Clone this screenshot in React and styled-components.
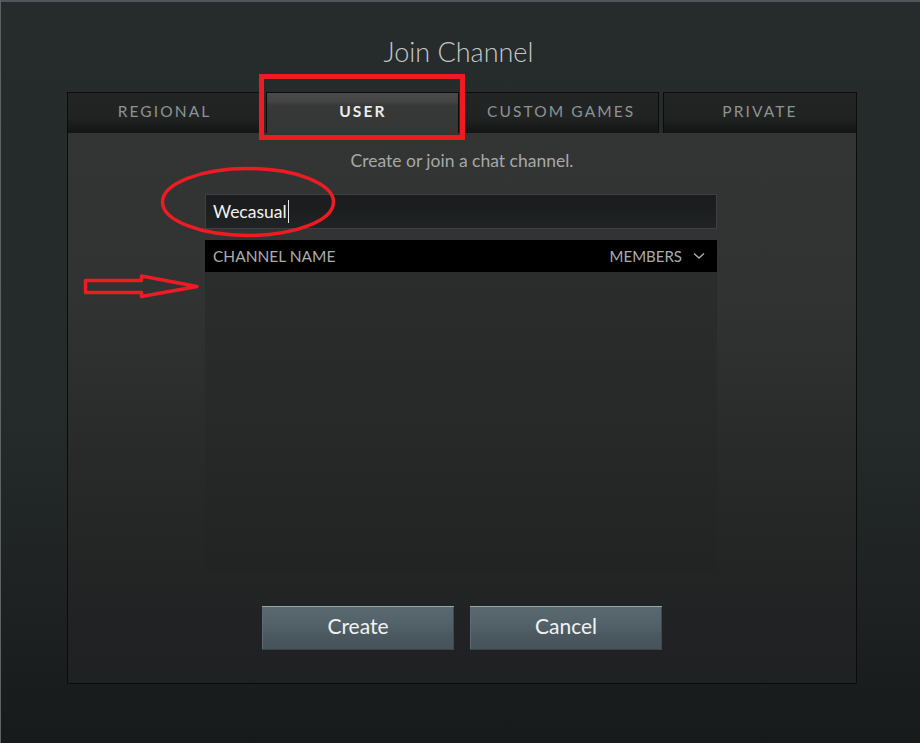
import React from 'react';
import styled, { createGlobalStyle } from 'styled-components';

const GlobalStyle = createGlobalStyle`
    html, body {
        margin: 0;
        padding: 0;
        background: #161a1b;
    }
    * {
        box-sizing: border-box;
    }
`

const Screen = styled.div`
    position: relative;
    width: 920px;
    height: 743px;
    overflow: hidden;
    display: flex;
    flex-direction: column;
    font-family: Lato, "Open Sans", sans-serif;
    background: linear-gradient(180deg, #262b2c 0%, #252a2b 55%, #1c2021 85%, #161a1b 100%);
    box-shadow: inset 1px 0 0 #5d6365, inset 0 2px 0 #50575a;
`

const Title = styled.h1`
    margin: 36px 0 0;
    height: 32px;
    line-height: 32px;
    text-align: center;
    font-size: 27px;
    font-weight: 300;
    color: #c6c8c8;
    padding-right: 3px;
`

const Panel = styled.div`
    margin: 24px 0 0 67px;
    width: 790px;
    display: flex;
    flex-direction: column;
`

const Tabs = styled.div`
    display: grid;
    grid-template-columns: 195px 193px 195px 194px;
    column-gap: 4px;
    justify-content: space-between;
    height: 41px;
`

const Tab = styled.div`
    display: flex;
    align-items: center;
    justify-content: center;
    border: 1px solid #0b0c0c;
    border-bottom: none;
    font-size: 15.5px;
    letter-spacing: 2.1px;
    font-weight: ${p => (p.$active ? 700 : 400)};
    color: ${p => (p.$active ? '#ececec' : '#8d9394')};
    background: ${p => (p.$active
        ? 'linear-gradient(180deg, #4a4a4a 0%, #454545 20%, #373838 32%, #353636 100%)'
        : 'linear-gradient(180deg, #232525 0%, #212323 62%, #181a1a 85%, #141616 100%)')};
    padding-bottom: 4px;
`

const Body = styled.div`
    height: 551px;
    border: 1px solid #0a0b0b;
    border-top: none;
    background: linear-gradient(180deg, #333434 0%, #313232 30%, #252727 70%, #1e2021 100%);
    display: flex;
    flex-direction: column;
    padding-top: 18px;
`

const Subtitle = styled.p`
    margin: 0;
    text-align: center;
    font-size: 17.5px;
    line-height: 20px;
    color: #a6a9a9;
`

const Column = styled.div`
    margin-left: 137px;
    width: 512px;
    display: flex;
    flex-direction: column;
`

const Input = styled.div`
    margin-top: 23px;
    height: 35px;
    border: 1px solid #3d3f40;
    background: linear-gradient(180deg, #1a1c1d 0%, #1c1e1f 50%, #212425 100%);
    display: flex;
    align-items: center;
    padding-left: 7px;
    font-size: 17.5px;
    color: #f2f2f2;
`

const Caret = styled.span`
    display: inline-block;
    width: 1px;
    height: 23px;
    background: #e8e8e8;
    margin-left: 1px;
`

const Table = styled.div`
    margin-top: 11px;
    display: flex;
    flex-direction: column;
`

const TableHead = styled.div`
    height: 32px;
    background: #000;
    display: flex;
    align-items: center;
    justify-content: space-between;
    padding: 0 12px 0 8px;
    font-size: 15.5px;
    color: #a9adad;
`

const HeadRight = styled.div`
    display: flex;
    align-items: center;
    gap: 11px;
    font-size: 15px;
`

const TableBody = styled.div`
    height: 301px;
    background: linear-gradient(180deg, #2b2c2c 0%, #282929 40%, #222424 100%);
`

const Buttons = styled.div`
    margin-top: 33px;
    display: flex;
    justify-content: center;
    gap: 16px;
`

const Button = styled.button`
    width: 192px;
    height: 43px;
    border: none;
    border-top: 1px solid #9aa3a6;
    background: linear-gradient(180deg, #5a6870 0%, #53626a 40%, #4a575e 70%, #46535a 100%);
    box-shadow: inset 1px 0 0 #5e6b72, inset -1px 0 0 #3e4a50, 0 1px 0 #3a4449;
    font-family: Lato, "Open Sans", sans-serif;
    font-size: 21px;
    color: #f0f2f2;
    padding: 0 0 5px;
    cursor: pointer;
`

const Overlay = styled.svg`
    position: absolute;
    top: 0;
    left: 0;
    pointer-events: none;
`

const tabs = ['REGIONAL', 'USER', 'CUSTOM GAMES', 'PRIVATE'];

function App() {
    return (
        <Screen>
            <GlobalStyle />
            <Title>Join Channel</Title>
            <Panel>
                <Tabs>
                    {tabs.map(t => (
                        <Tab key={t} $active={t === 'USER'}>{t}</Tab>
                    ))}
                </Tabs>
                <Body>
                    <Subtitle>Create or join a chat channel.</Subtitle>
                    <Column>
                        <Input>Wecasual<Caret /></Input>
                        <Table>
                            <TableHead>
                                <span>CHANNEL NAME</span>
                                <HeadRight>
                                    <span>MEMBERS</span>
                                    <svg width="12" height="8" viewBox="0 0 12 8">
                                        <polyline points="1,1.5 6,6 11,1.5" fill="none" stroke="#a9adad" strokeWidth="1.4" />
                                    </svg>
                                </HeadRight>
                            </TableHead>
                            <TableBody />
                        </Table>
                    </Column>
                    <Buttons>
                        <Button>Create</Button>
                        <Button>Cancel</Button>
                    </Buttons>
                </Body>
            </Panel>

            {/* red annotations drawn over the screenshot */}
            <Overlay width="920" height="743" viewBox="0 0 920 743">
                <rect x="261.5" y="76.5" width="201" height="61" fill="none" stroke="#ed1c24" strokeWidth="5" />
                <ellipse cx="248" cy="202" rx="85.5" ry="33.5" fill="none" stroke="#ed1c24" strokeWidth="3.5" />
                <polygon
                    points="85.5,280.5 141.5,280.5 141.5,276 197,286.5 141.5,296.5 141.5,292.5 85.5,292.5"
                    fill="none"
                    stroke="#ed1c24"
                    strokeWidth="3.5"
                    strokeLinejoin="round"
                />
            </Overlay>
        </Screen>
    );
}

export default App;
